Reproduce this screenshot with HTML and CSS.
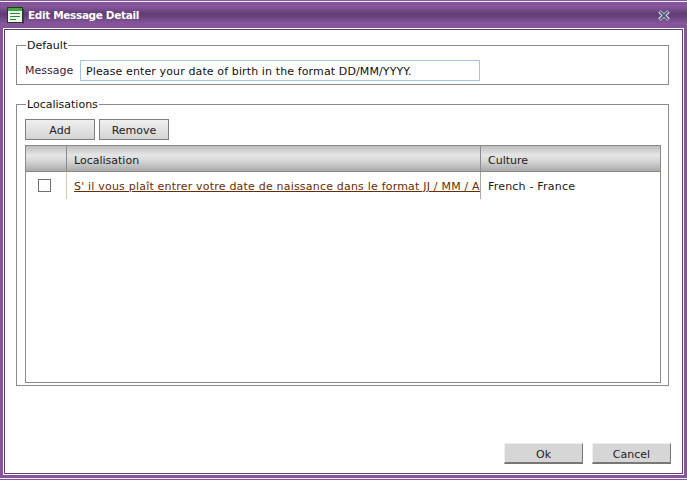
FILE: index.html
```html
<!DOCTYPE html>
<html lang="en">
<head>
<meta charset="utf-8">
<title>Edit Message Detail</title>
<link rel="stylesheet" href="styles.css">
</head>
<body>
<div class="window">
  <div class="frame">
    <div class="titlebar">
      <svg class="title-icon" width="18" height="17" viewBox="0 0 18 17">
        <rect x="0.5" y="0.5" width="15" height="15" fill="#eef7ea" stroke="#1c3d24"/>
        <rect x="1" y="1" width="14" height="3" fill="#3fa83f"/>
        <rect x="3" y="6" width="10" height="1" fill="#1f8a3a"/>
        <rect x="3" y="9" width="10" height="1" fill="#1f8a3a"/>
        <rect x="3" y="12" width="6" height="1" fill="#1f8a3a"/>
        <rect x="16" y="2" width="1" height="15" fill="#4d3060"/>
      </svg>
      <span class="title-text">Edit Message Detail</span>
      <svg class="close-icon" width="12" height="11" viewBox="0 0 12 11">
        <path d="M1.5 1.5L10.5 9.5M10.5 1.5L1.5 9.5" stroke="#fff" stroke-width="3.6" fill="none"/>
        <path d="M2 1.5L10 9.5M10 1.5L2 9.5" stroke="#4f5f7c" stroke-width="2.2" fill="none"/>
      </svg>
    </div>
    <div class="content">
      <fieldset class="group group-default">
        <legend>Default</legend>
        <div class="field">
          <label class="field-label" for="msg">Message</label>
          <input id="msg" class="text-input" type="text" value="Please enter your date of birth in the format DD/MM/YYYY.">
        </div>
      </fieldset>
      <fieldset class="group group-local">
        <legend>Localisations</legend>
        <div class="toolbar">
          <button class="btn btn-tool">Add</button>
          <button class="btn btn-tool">Remove</button>
        </div>
        <div class="grid">
          <div class="grid-row grid-head">
            <div class="cell cell-check"></div>
            <div class="cell cell-loc">Localisation</div>
            <div class="cell cell-cult">Culture</div>
          </div>
          <div class="grid-row grid-item">
            <div class="cell cell-check"><span class="checkbox"></span></div>
            <div class="cell cell-loc"><a class="link" href="#">S' il vous plaît entrer votre date de naissance dans le format JJ / MM / AAAA.</a></div>
            <div class="cell cell-cult">French - France</div>
          </div>
        </div>
      </fieldset>
      <div class="footer">
        <button class="btn btn-foot">Ok</button>
        <button class="btn btn-foot">Cancel</button>
      </div>
    </div>
  </div>
</div>
</body>
</html>
```
FILE: styles.css
```css
* { box-sizing: border-box; }
html, body { margin: 0; padding: 0; }
body {
  width: 687px;
  height: 480px;
  overflow: hidden;
  background: #fff;
  font-family: "DejaVu Sans", sans-serif;
  font-size: 11px;
  color: #1a1a1a;
}
.window {
  width: 687px;
  height: 480px;
  background: #85559a;
  padding: 1px 0;
}
.frame {
  height: 478px;
  display: flex;
  flex-direction: column;
  border-top: 1px solid #f3edf6;
  border-bottom: 1px solid #f3edf6;
  padding: 0 0 3px;
}
.titlebar {
  height: 26px;
  display: flex;
  align-items: center;
  padding: 0 17px 0 7px;
  background: linear-gradient(#85559a 0, #85559a 5px, #5f3c72 12px, #6a4480 15px, #85559a 21px, #85559a 100%);
}
.title-icon { flex: none; margin-top: 1px; }
.title-text {
  margin-left: 3px;
  font-weight: 700;
  font-size: 10.5px;
  letter-spacing: -0.35px;
  color: #fff;
}
.close-icon { margin-left: auto; }
.content {
  flex: 1;
  margin: 0 3px 0 3px;
  background: #fff;
  border: 1px solid #fff;
  box-shadow: inset 0 0 0 1px #5f3c72;
  padding: 10px 12px 10px 12px;
  display: flex;
  flex-direction: column;
}
.group {
  margin: 0;
  border: 1px solid #8a8a8a;
  min-width: 0;
}
.group legend {
  padding: 0 1px;
  margin-left: 1px;
  line-height: 13px;
  color: #111;
}
.group-default {
  height: 46px;
  padding: 0 8px;
  width: 653px;
}
.field { display: flex; align-items: center; margin-top: 8px; }
.field-label { width: 55px; color: #3a2238; }
.text-input {
  width: 400px;
  height: 21px;
  border: 1px solid #a5c4e4;
  padding: 1px 5px 0;
  font: inherit;
  letter-spacing: 0.12px;
  color: #111;
  background: #fff;
  outline: none;
}
.group-local {
  margin-top: 13px;
  height: 288px;
  width: 653px;
  padding: 8px 8px 0;
}
.toolbar { display: flex; gap: 4px; }
.btn {
  font: inherit;
  color: #222;
  padding: 2px 0 0;
  cursor: pointer;
}
.btn-tool {
  width: 70px;
  height: 21px;
  border: 1px solid #7e7e7e;
  background: linear-gradient(#efefef, #d4d4d4);
}
.grid {
  margin-top: 5px;
  width: 636px;
  height: 238px;
  border: 1px solid #8a8a82;
  background: #fff;
}
.grid-row { display: flex; }
.grid-head {
  height: 26px;
  border-bottom: 1px solid #8a8a82;
  background: linear-gradient(#bdbdbd 0, #e6e6e6 9px, #d6d6d6 15px, #aaa 25px);
}
.grid-head .cell { line-height: 30px; }
.grid-item { height: 27px; letter-spacing: 0.2px; }
.grid-item .cell { line-height: 29px; }
.cell { padding-left: 7px; white-space: nowrap; overflow: hidden; }
.cell-check { width: 40px; padding: 0 3px 0 0; display: flex; align-items: center; justify-content: center; }
.cell-loc { width: 414px; border-left: 1px solid #8c8c8c; }
.cell-cult { flex: 1; border-left: 1px solid #8c8c8c; }
.grid-item .cell-loc { border-left-color: #d8c4b4; }
.grid-item .cell-cult { border-left-color: #b0a8a0; }
.checkbox { width: 13px; height: 13px; border: 1px solid #707070; background: #fff; display: block; }
.link { color: #6a2c00; text-decoration: underline; }
.footer {
  margin-top: auto;
  display: flex;
  justify-content: flex-end;
  gap: 9px;
}
.btn-foot {
  width: 79px;
  height: 21px;
  border: 0;
  border-right: 1px solid #777;
  border-bottom: 2px solid #777;
  border-top: 1px solid #eee;
  border-left: 1px solid #eee;
  background: #d6d6d6;
}
```
